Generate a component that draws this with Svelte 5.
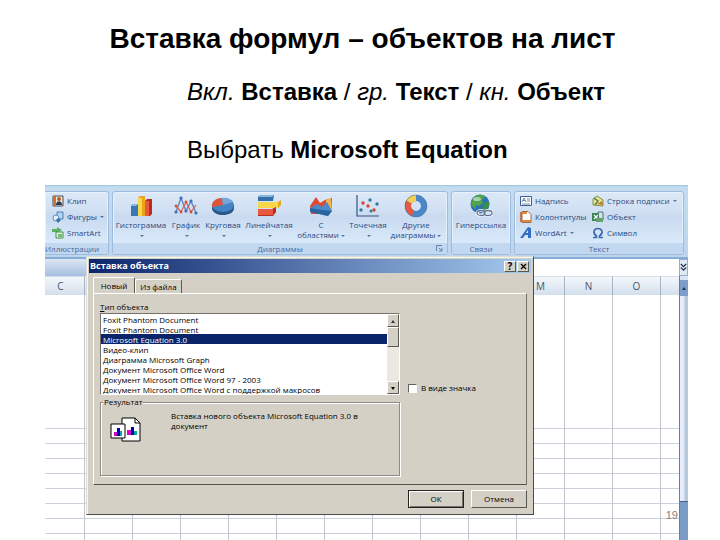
<script>
  const charts = [
    { icon: "bars", lines: ["Гистограмма"] },
    { icon: "line", lines: ["График"] },
    { icon: "pie", lines: ["Круговая"] },
    { icon: "hbars", lines: ["Линейчатая"] },
    { icon: "area", lines: ["С", "областями"] },
    { icon: "scatter", lines: ["Точечная"] },
    { icon: "ring", lines: ["Другие", "диаграммы"] },
  ];

  const illustrations = [
    { icon: "clip", name: "Клип" },
    { icon: "shapes", name: "Фигуры", menu: true },
    { icon: "smart", name: "SmartArt" },
  ];

  const textTools = [
    { icon: "textbox", name: "Надпись" },
    { icon: "sign", name: "Строка подписи", menu: true },
    { icon: "header", name: "Колонтитулы" },
    { icon: "object", name: "Объект" },
    { icon: "wordart", name: "WordArt", menu: true },
    { icon: "omega", name: "Символ" },
  ];

  // the columns between C and M stay under the dialog
  const columns = ["C", ...Array(9).fill(""), "M", "N", "O"];
  const rows = Array.from({ length: 9 });

  const types = [
    "Foxit Phantom Document",
    "Foxit Phantom Document",
    "Microsoft Equation 3.0",
    "Видео-клип",
    "Диаграмма Microsoft Graph",
    "Документ Microsoft Office Word",
    "Документ Microsoft Office Word 97 - 2003",
    "Документ Microsoft Office Word с поддержкой макросов",
  ];

  let selected = $state(2);
  let asIcon = $state(false);
</script>

{#snippet bigIcon(name)}
  <svg class="big-icon" viewBox="0 0 24 24" aria-hidden="true">
    {#if name === "bars"}
      <path d="M2 12l2-2h5v12H2z" fill="#3b76b8" />
      <path d="M2 12l2-2h5l-2 2z" fill="#8db9e2" />
      <path d="M9 4l2-2h5v20H9z" fill="#e9a51c" />
      <path d="M9 4h4v18H9z" fill="#f8d84a" />
      <path d="M16 7l2-2h5v15l-2 2h-5z" fill="#b92b1c" />
      <path d="M16 7h4v15h-4z" fill="#e9573d" />
    {:else if name === "line"}
      <path d="M2 18L7 4l5 13 5-10 5 12" fill="none" stroke="#5b89c4" stroke-width="1.4" />
      <path d="M2 12l5 6 5-10 5 10 5-7" fill="none" stroke="#d8604c" stroke-width="1.2" />
      <g fill="#3f6fb4"><circle cx="7" cy="4" r="1.6" /><circle cx="12" cy="17" r="1.6" /><circle cx="17" cy="7" r="1.6" /><circle cx="22" cy="19" r="1.6" /><circle cx="2" cy="18" r="1.6" /></g>
      <g fill="#d84b36"><circle cx="7" cy="18" r="1.4" /><circle cx="12" cy="8" r="1.4" /><circle cx="17" cy="18" r="1.4" /><circle cx="2" cy="12" r="1.4" /></g>
    {:else if name === "pie"}
      <path d="M1 11v4c1 4 6 6 11 6s11-2 11-7v-4z" fill="#285888" />
      <ellipse cx="12" cy="11" rx="11" ry="7" fill="#4384c4" />
      <path d="M12 11L1 13c-1-5 4-9 10-9z" fill="#e0553a" />
      <path d="M12 11L11 4c5-1 9 1 11 4z" fill="#75a7d8" />
    {:else if name === "hbars"}
      <path d="M1 3l2-2h14l-1 6H1z" fill="#326fac" />
      <path d="M1 3l2-2h14l-2 2z" fill="#8bb8df" />
      <path d="M1 8h20l3-2v5l-3 3H1z" fill="#e5a621" />
      <path d="M1 8h20v6H1z" fill="#f8d74a" />
      <path d="M1 15h14l4-2v5l-3 4H1z" fill="#b92d1c" />
      <path d="M1 15h15v6H1z" fill="#e6583f" />
    {:else if name === "area"}
      <path d="M1 12l6-9 4 6 5-3 7-2v12l-5 4H2z" fill="#dd4b34" />
      <path d="M17 6l5-2 1 12-6-1z" fill="#f2b64b" />
      <path d="M1 14l7-4 5 3 5-5 5 9-4 5-17-4z" fill="#4b8acb" />
      <path d="M1 14v4l18 4 4-5-10-1z" fill="#2b62a0" />
    {:else if name === "scatter"}
      <path d="M1 1v21h22" fill="none" stroke="#31557f" stroke-width="1.2" />
      <g fill="#d8432f"><circle cx="7" cy="9" r="1.7" /><circle cx="12" cy="12" r="1.7" /><circle cx="18" cy="16" r="1.7" /></g>
      <g fill="#327d9b"><circle cx="5" cy="16" r="1.7" /><circle cx="14" cy="6" r="1.7" /><circle cx="15" cy="17" r="1.5" /><circle cx="21" cy="10" r="1.7" /></g>
    {:else if name === "ring"}
      <circle cx="12" cy="12" r="8" fill="none" stroke="#4b86c6" stroke-width="6" />
      <path d="M9 19.400a8 8 0 0 1-4-11.400" fill="none" stroke="#e05a45" stroke-width="6" />
      <path d="M5 8a8 8 0 0 1 7-4" fill="none" stroke="#f5cf4d" stroke-width="6" />
      <circle cx="12" cy="12" r="11" fill="none" stroke="#3c699c" stroke-width=".5" />
    {:else}
      <circle cx="11" cy="10" r="9.5" fill="#2d70b8" />
      <path d="M4 4c4-4 10-4 12-1l-3 3 1 3-4 3-3-1-1 4-4-4z" fill="#4fa34b" />
      <path d="M15 9l5-2c1 5-1 8-4 10l-3-3z" fill="#398b54" />
      <ellipse cx="8" cy="5" rx="4" ry="2" fill="#c7e8d5" opacity=".7" />
      <g fill="none" stroke="#f8fbff" stroke-width="3"><ellipse cx="12" cy="19" rx="4" ry="2.5" /><ellipse cx="19" cy="19" rx="4" ry="2.5" /></g>
      <g fill="none" stroke="#5d7391" stroke-width="1.3"><ellipse cx="12" cy="19" rx="4" ry="2.5" /><ellipse cx="19" cy="19" rx="4" ry="2.5" /></g>
    {/if}
  </svg>
{/snippet}

{#snippet smallIcon(name)}
  <svg class="small-icon" viewBox="0 0 12 12" aria-hidden="true">
    {#if name === "clip"}
      <path d="M1 1h10v10H1z" fill="#f4e8d0" stroke="#3d4d69" />
      <path d="M1 1h3v10H1z" fill="#c97435" />
      <circle cx="7" cy="4" r="2" fill="#b55c2a" />
      <path d="M4 10c0-5 6-5 6 0z" fill="#2c3855" />
    {:else if name === "shapes"}
      <path d="M5 1h6v7H5z" fill="#b7d3f0" stroke="#4e7fb7" />
      <circle cx="4" cy="7" r="3" fill="#e4f0fb" stroke="#5c8fc4" />
      <path d="M6 7l3 2-3 3-2-3z" fill="#3970ae" />
    {:else if name === "smart"}
      <path d="M0 2h5V0l5 3-5 3V5H0z" fill="#5fae64" />
      <path d="M4 5h7v6H4z" fill="#e3f3df" stroke="#3e9349" />
      <path d="M6 7h4v3H6z" fill="#78bb78" />
    {:else if name === "textbox"}
      <path d="M.5 1.5h11v9H.5z" fill="#fff" stroke="#3c5f91" />
      <path d="M2 7l2-4 2 4M3 5.500h2M7 4h3M7 6h3M2 9h8" fill="none" stroke="#44699a" stroke-width=".8" />
    {:else if name === "sign"}
      <path d="M1 10V4l4-3 6 4v6z" fill="#efdf96" stroke="#7d9148" />
      <path d="M2 3l4 3-3 4" fill="none" stroke="#4d8a45" stroke-width="1.500" />
      <path d="M5 9l5-3 1 4z" fill="#c3763a" />
    {:else if name === "header"}
      <path d="M2 .5h6l3 3v8H2z" fill="#fff" stroke="#9a6b49" />
      <path d="M2 1h5v2H2zM2 9h9v2H2z" fill="#df8841" />
      <path d="M1 1v10" stroke="#bb5a22" stroke-width="1.500" />
    {:else if name === "object"}
      <path d="M0 2h8v8H0z" fill="#398653" />
      <path d="M2 4l4 4M6 4L2 8" stroke="#fff" stroke-width="1.200" />
      <path d="M6 1h5v8H7z" fill="#d5e9d7" stroke="#466e86" />
      <path d="M4 7h7v4H4z" fill="#65a36c" />
    {:else if name === "wordart"}
      <path d="M0 11L8 0l3 1v10H8V8H5l-2 3z" fill="#356fc1" />
      <path d="M6 6h2V3z" fill="#d7e7fa" />
    {:else}
      <path d="M1 10.500h3.500V9C0 6 2 1.500 6 1.500S12 6 7.500 9v1.500H11" fill="none" stroke="#3b68ad" stroke-width="1.600" />
    {/if}
  </svg>
{/snippet}

<main class="slide">
  <h1>Вставка формул – объектов на лист</h1>
  <div class="steps">
    <p><em>Вкл.</em> <b>Вставка</b> / <em>гр.</em> <b>Текст</b> / <em>кн.</em> <b>Объект</b></p>
    <p>Выбрать <b>Microsoft Equation</b></p>
  </div>

  <section class="excel">
    <div class="ribbon">
      <div class="group group-first">
        <div class="stack">
          {#each illustrations as tool}
            <button class="tool">
              {@render smallIcon(tool.icon)}{tool.name}{#if tool.menu}<i class="arrow"></i>{/if}
            </button>
          {/each}
        </div>
        <div class="caption">Иллюстрации</div>
      </div>

      <div class="group">
        <div class="charts">
          {#each charts as chart}
            <button class="chart">
              {@render bigIcon(chart.icon)}
              <span>{chart.lines[0]}</span>
              <span>{chart.lines[1] ?? ""}<i class="arrow"></i></span>
            </button>
          {/each}
        </div>
        <div class="caption">
          Диаграммы
          <svg class="launcher" viewBox="0 0 7 7" aria-hidden="true">
            <path d="M.5 6V.5H6M3 3l3 3M6 3v3H3" fill="none" stroke="#6584ad" />
          </svg>
        </div>
      </div>

      <div class="group">
        <button class="chart link">
          {@render bigIcon("globe")}
          <span>Гиперссылка</span>
        </button>
        <div class="caption">Связи</div>
      </div>

      <div class="group group-last">
        <div class="text-tools">
          {#each textTools as tool}
            <button class="tool">
              {@render smallIcon(tool.icon)}{tool.name}{#if tool.menu}<i class="arrow"></i>{/if}
            </button>
          {/each}
        </div>
        <div class="caption">Текст</div>
      </div>
    </div>

    <div class="formula-bar">
      <span class="name-box"></span>
      <button class="expand" aria-label="Развернуть строку формул">
        <svg viewBox="0 0 8 10" aria-hidden="true"><path d="M1 1l3 3 3-3M1 5l3 3 3-3" fill="none" stroke="#26344f" stroke-width="1.500" /></svg>
      </button>
    </div>

    <div class="workbook">
      <div class="sheet">
        <table>
          <thead>
            <tr>
              {#each columns as column}
                <th>{column}</th>
              {/each}
              <th class="rest"></th>
            </tr>
          </thead>
          <tbody>
            {#each rows as _, i}
              <tr class:tall={i === 0}>
                {#each columns as _}
                  <td></td>
                {/each}
                <td></td>
              </tr>
            {/each}
          </tbody>
        </table>
      </div>
      <div class="scroll">
        <button class="scroll-up" aria-label="Вверх"><i class="up"></i></button>
        <div class="thumb"></div>
      </div>
      <span class="page">19</span>
    </div>

    <div class="dialog" role="dialog" aria-labelledby="dialog-title">
      <header>
        <span id="dialog-title">Вставка объекта</span>
        <button aria-label="Справка">?</button>
        <button aria-label="Закрыть">
          <svg viewBox="0 0 7 7" aria-hidden="true"><path d="M1 1l5 5M6 1L1 6" stroke="#000" stroke-width="1.300" /></svg>
        </button>
      </header>

      <div class="tabs">
        <button class="tab active">Новый</button>
        <button class="tab">Из файла</button>
      </div>

      <div class="panel">
        <label class="list-label" for="types"><u>Т</u>ип объекта</label>
        <div class="row">
          <div class="listbox">
            <select id="types" size="8" bind:value={selected}>
              {#each types as type, i}
                <option value={i}>{type}</option>
              {/each}
            </select>
            <div class="list-scroll">
              <button aria-label="Вверх"><i class="up"></i></button>
              <div class="list-thumb"></div>
              <button class="down-button" aria-label="Вниз"><i class="down"></i></button>
            </div>
          </div>
          <label class="check"><input type="checkbox" bind:checked={asIcon} /> В виде значка</label>
        </div>

        <fieldset>
          <legend>Результат</legend>
          <svg class="result-icon" viewBox="0 0 31 25" aria-hidden="true">
            <path d="M12 1h13l5 5v18H12z" fill="#fff" stroke="#000" />
            <path d="M25 1v5h5" fill="none" stroke="#000" />
            <path d="M1 7h14v14H1z" fill="#fff" stroke="#000" />
            <path d="M4 15h3v4H4z" fill="#c0c" />
            <path d="M7 11h3v8H7z" fill="#00a" />
            <path d="M10 14h2v5h-2z" fill="#0aa" />
            <path d="M17 13h4v5h-4z" fill="#d0c" />
            <path d="M21 10h3v8h-3z" fill="#00a" />
            <path d="M24 14h3v4h-3z" fill="#0a9" />
          </svg>
          <p>Вставка нового объекта Microsoft Equation 3.0 в документ</p>
        </fieldset>
      </div>

      <footer>
        <button class="default">ОК</button>
        <button>Отмена</button>
      </footer>
    </div>
  </section>
</main>

<style>
  :global(body) {
    margin: 0;
    background: #fff;
  }

  .slide {
    box-sizing: border-box;
    color: #000;
    display: flex;
    flex-direction: column;
    font-family: "Liberation Sans", Arial, sans-serif;
    min-height: 100vh;
    overflow: hidden;
  }

  h1 {
    font-size: 28px;
    line-height: 32px;
    margin: 23px 0 0;
    padding-left: 5px;
    text-align: center;
  }

  .steps {
    font-size: 24px;
    line-height: 30px;
    margin: 22px 0 20px 187px;
  }

  .steps p {
    margin: 0 0 28px;
  }

  .steps p:last-child {
    margin-bottom: 0;
  }

  button {
    background: none;
    border: 0;
    color: inherit;
    font: inherit;
    padding: 0;
  }

  .excel {
    display: flex;
    flex: 1;
    flex-direction: column;
    margin: 0 32px 0 45px;
    position: relative;
  }

  .ribbon {
    background: linear-gradient(#9cc3dc 0, #c3dcf0 2px, #bdd6ee 100%);
    border-bottom: 2px solid #85aed6;
    box-sizing: border-box;
    color: #2d4a7c;
    display: flex;
    font-family: "Open Sans", "Liberation Sans", sans-serif;
    font-size: 8px;
    gap: 3px;
    height: 74px;
    line-height: 10px;
    padding: 6px 4px 2px 0;
  }

  .group {
    background: linear-gradient(#dce8f7 0, #cfdff2 20px, #c9daf0 24px, #d9e9fa 50px);
    border: 1px solid #9dbbdd;
    border-radius: 3px;
    box-shadow: inset 0 0 0 1px #e8f2fc;
    box-sizing: border-box;
    display: flex;
    flex-direction: column;
    justify-content: space-between;
    overflow: hidden;
  }

  .group-first {
    border-left: 0;
    border-radius: 0 3px 3px 0;
    width: 64px;
  }

  .group-last {
    flex: 1;
  }

  .caption {
    align-items: center;
    background: #c2d8f0;
    color: #48699c;
    display: flex;
    height: 11px;
    justify-content: center;
    position: relative;
  }

  .group-first .caption {
    justify-content: flex-start;
  }

  .launcher {
    height: 7px;
    position: absolute;
    right: 4px;
    width: 7px;
  }

  .stack {
    padding: 1px 0 0 7px;
  }

  .text-tools {
    display: grid;
    grid-template-columns: 72px 1fr;
    padding: 1px 0 0 5px;
  }

  .tool {
    align-items: center;
    display: flex;
    gap: 3px;
    height: 16px;
    white-space: nowrap;
  }

  .small-icon {
    flex: none;
    height: 12px;
    width: 12px;
  }

  .charts {
    display: grid;
    grid-template-columns: 56px 34px 40px 52px 52px 42px 54px;
    padding: 2px 4px 0 0;
  }

  .chart {
    align-items: center;
    display: flex;
    flex-direction: column;
    justify-content: flex-start;
    white-space: nowrap;
  }

  .link {
    padding: 2px 2px 0;
    width: 58px;
  }

  .big-icon {
    height: 24px;
    margin-bottom: 2px;
    width: 24px;
  }

  .arrow,
  .up,
  .down {
    border: 2px solid transparent;
    border-bottom-width: 0;
    border-top-color: #5674a2;
    display: inline-block;
    height: 0;
    vertical-align: middle;
    width: 0;
  }

  .chart .arrow {
    margin-left: 2px;
  }

  .formula-bar {
    background: #fff;
    display: flex;
    height: 17px;
    justify-content: space-between;
  }

  .name-box {
    background: linear-gradient(#dce7f4, #a6bfdf);
    width: 41px;
  }

  .expand {
    background: #dfeaf7;
    border: 1px solid #93acd0;
    width: 9px;
  }

  .expand svg {
    display: block;
    height: 9px;
    width: 7px;
  }

  .workbook {
    display: flex;
    flex: 1;
    position: relative;
  }

  .sheet {
    flex: 1;
    height: 264px;
    overflow: hidden;
  }

  table {
    border-collapse: separate;
    border-spacing: 0;
    table-layout: fixed;
    width: 100%;
  }

  th {
    background: linear-gradient(#f4f7fb, #d3dfec);
    border-right: 1px solid #a3b3c8;
    border-top: 1px solid #d5deea;
    box-sizing: border-box;
    color: #46556b;
    font-family: "Open Sans", "Liberation Sans", sans-serif;
    font-size: 10px;
    font-weight: 400;
    height: 19px;
    line-height: 16px;
    padding: 0;
    width: 48px;
  }

  th:first-child {
    padding-right: 8px;
    width: 40px;
  }

  th.rest {
    border-right: 0;
    width: auto;
  }

  td {
    border-bottom: 1px solid #ccd0da;
    border-right: 1px solid #c3c5cc;
    box-sizing: border-box;
    height: 15px;
    padding: 0;
  }

  td:last-child {
    border-right: 0;
  }

  .tall td {
    height: 134px;
  }

  .scroll {
    background: #7b9cc6;
    border-left: 1px solid #7177ab;
    box-sizing: border-box;
    display: flex;
    flex-direction: column;
    width: 9px;
  }

  .scroll-up {
    background: #7d9dcb;
    border-top: 4px solid #d8e5f4;
    height: 20px;
    line-height: 8px;
  }

  .thumb {
    background: linear-gradient(90deg, #e7eeff 0, #e0e8fa 4px, #b6cad8 5px);
    border-bottom: 1px solid #46618d;
    height: 205px;
  }

  .up {
    border-bottom: 3px solid #26344f;
    border-top: 0;
  }

  .down {
    border-top: 3px solid #000;
  }

  .page {
    color: #808080;
    font-size: 11px;
    line-height: 14px;
    position: absolute;
    right: 10px;
    top: 232px;
  }

  .dialog {
    background: #d5d0c6;
    border: 1px solid;
    border-color: #d9ddd5 #4b4b4b #4b4b4b #d9ddd5;
    box-shadow: inset 1px 1px #f7f7f2;
    box-sizing: border-box;
    font-family: "Open Sans", "Liberation Sans", sans-serif;
    font-size: 8px;
    left: 41px;
    line-height: 10px;
    padding: 2px 6px 6px;
    position: absolute;
    top: 71px;
    width: 448px;
  }

  .dialog header {
    align-items: center;
    background: linear-gradient(90deg, #0b256c, #a5caef);
    color: #fff;
    display: flex;
    font-weight: 700;
    gap: 1px;
    height: 14px;
    margin: 0 -4px;
    padding: 0 2px 0 1px;
  }

  .dialog header span {
    flex: 1;
    font-size: 9px;
  }

  .dialog header button,
  .list-scroll button,
  .list-thumb,
  footer button {
    background: #d5d0c6;
    border: 1px solid;
    border-color: #fff #5c5953 #5c5953 #fff;
    box-sizing: border-box;
    color: #000;
  }

  .dialog header button {
    font-size: 10px;
    height: 11px;
    line-height: 9px;
    width: 12px;
  }

  .dialog header button svg {
    display: block;
    height: 7px;
    margin: auto;
    width: 7px;
  }

  .tabs {
    align-items: flex-end;
    display: flex;
    height: 20px;
  }

  .tab {
    border: 1px solid;
    border-color: #fff #5c5953 transparent #fff;
    border-bottom: 0;
    border-radius: 2px 2px 0 0;
    box-sizing: border-box;
    height: 14px;
    width: 47px;
  }

  .tab.active {
    height: 16px;
    width: 42px;
  }

  .panel {
    border: 1px solid;
    border-color: #fff #77736b #55524c #fff;
    padding: 8px 6px;
  }

  .list-label {
    display: block;
    height: 11px;
  }

  .row {
    align-items: flex-end;
    display: flex;
    gap: 8px;
  }

  .listbox {
    background: #fff;
    border: 1px solid;
    border-color: #77736b #fff #fff #77736b;
    box-sizing: border-box;
    display: flex;
    height: 82px;
    width: 300px;
  }

  select {
    appearance: none;
    background: #fff;
    border: 0;
    color: #000;
    flex: 1;
    font: inherit;
    height: 80px;
    outline: 0;
    overflow: hidden;
    padding: 0;
  }

  option {
    box-sizing: border-box;
    height: 10px;
    line-height: 10px;
    min-height: 10px;
    padding: 0 2px;
  }

  option:checked {
    background: #0a246a linear-gradient(#0a246a, #0a246a);
    color: #fff;
  }

  .list-scroll {
    background: #ebe8e2;
    display: flex;
    flex-direction: column;
    width: 12px;
  }

  .list-scroll button {
    height: 13px;
    line-height: 8px;
  }

  .list-thumb {
    height: 20px;
  }

  .list-scroll .down-button {
    margin-top: auto;
  }

  .check {
    align-items: center;
    display: flex;
    gap: 4px;
    padding-bottom: 2px;
  }

  .check input {
    appearance: none;
    background: #fff;
    border: 1px solid;
    border-color: #66625c #fff #fff #66625c;
    box-sizing: border-box;
    height: 9px;
    margin: 0;
    width: 9px;
  }

  .check input:checked {
    background: #0a246a;
  }

  fieldset {
    border: 1px solid #908b85;
    box-shadow: 1px 1px #fff, inset 1px 1px #fff;
    box-sizing: border-box;
    display: flex;
    gap: 30px;
    height: 79px;
    margin: 2px 0 0;
    padding: 4px 9px;
    width: 300px;
  }

  legend {
    background: #d5d0c6;
    line-height: 10px;
    margin-left: -7px;
    padding: 0 1px;
  }

  .result-icon {
    flex: none;
    height: 25px;
    margin-top: 6px;
    width: 31px;
  }

  fieldset p {
    flex: 1;
    margin: 0;
  }

  footer {
    display: flex;
    gap: 7px;
    justify-content: flex-end;
    padding-top: 5px;
  }

  footer button {
    height: 18px;
    width: 56px;
  }

  footer .default {
    border-color: #222;
    box-shadow: inset 1px 1px #fff, inset -1px -1px #77736b;
  }
</style>
